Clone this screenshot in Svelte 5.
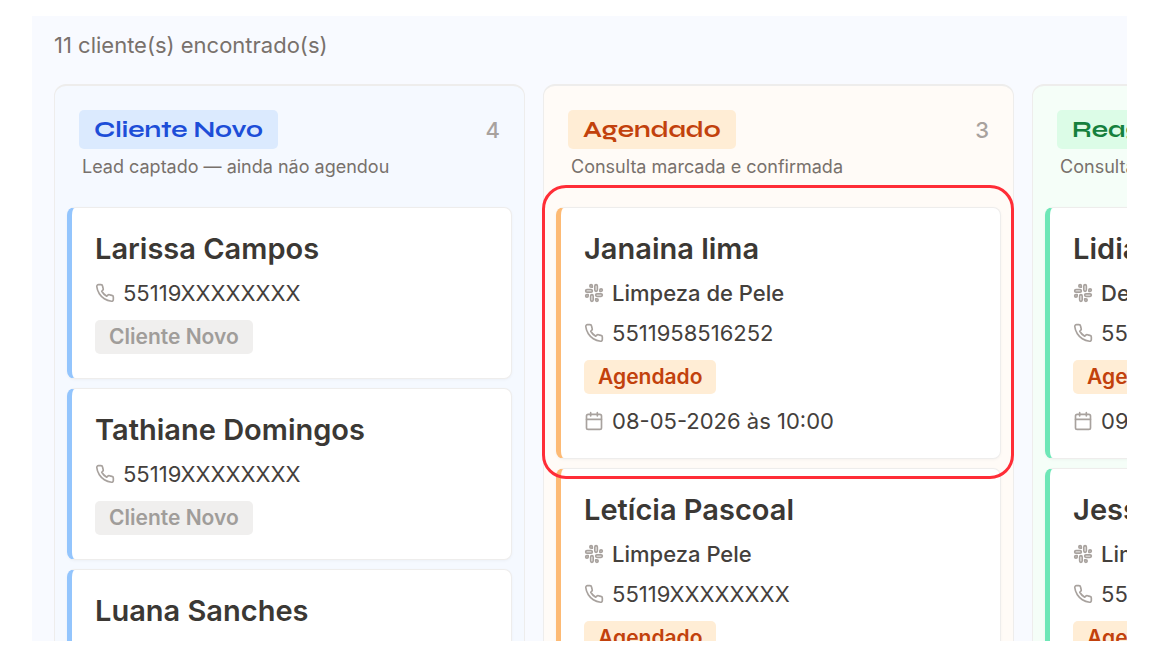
<script>
  const columns = [
    {
      title: 'Cliente Novo',
      tone: 'blue',
      count: 4,
      note: 'Lead captado — ainda não agendou',
      cards: [
        { name: 'Larissa Campos', phone: '55119XXXXXXXX', tag: 'Cliente Novo' },
        { name: 'Tathiane Domingos', phone: '55119XXXXXXXX', tag: 'Cliente Novo' },
        { name: 'Luana Sanches', phone: '55119XXXXXXXX', tag: 'Cliente Novo' }
      ]
    },
    {
      title: 'Agendado',
      tone: 'orange',
      count: 3,
      note: 'Consulta marcada e confirmada',
      cards: [
        { name: 'Janaina lima', service: 'Limpeza de Pele', phone: '5511958516252', tag: 'Agendado', date: '08-05-2026 às 10:00', selected: true },
        { name: 'Letícia Pascoal', service: 'Limpeza Pele', phone: '55119XXXXXXXX', tag: 'Agendado', date: '08-05-2026 às 11:00' }
      ]
    },
    {
      title: 'Reagendado',
      tone: 'green',
      count: 2,
      note: 'Consulta remarcada',
      cards: [
        { name: 'Lidia', service: 'Depilação', phone: '55119XXXXXXXX', tag: 'Agendado', date: '09-05-2026 às 10:00' },
        { name: 'Jessica', service: 'Limpeza de Pele', phone: '55119XXXXXXXX', tag: 'Agendado', date: '09-05-2026 às 11:00' }
      ]
    }
  ];
</script>

{#snippet icon(kind)}
  <svg class="icon" viewBox="0 0 24 24" aria-hidden="true">
    {#if kind === 'phone'}
      <path d="M22 16.92v3a2 2 0 0 1-2.18 2 19.79 19.79 0 0 1-8.63-3.07 19.5 19.5 0 0 1-6-6 19.79 19.79 0 0 1-3.07-8.67A2 2 0 0 1 4.11 2h3a2 2 0 0 1 2 1.72 12.84 12.84 0 0 0 .7 2.81 2 2 0 0 1-.45 2.11L8.09 9.91a16 16 0 0 0 6 6l1.27-1.27a2 2 0 0 1 2.11-.45 12.84 12.84 0 0 0 2.81.7A2 2 0 0 1 22 16.92z" />
    {:else if kind === 'service'}
      <rect width="3" height="8" x="13" y="2" rx="1.5" />
      <path d="M19 8.5V10h1.5A1.5 1.5 0 1 0 19 8.5" />
      <rect width="3" height="8" x="8" y="14" rx="1.5" />
      <path d="M5 15.5V14H3.5A1.5 1.5 0 1 0 5 15.5" />
      <rect width="8" height="3" x="14" y="13" rx="1.5" />
      <path d="M15.5 19H14v1.5a1.5 1.5 0 1 0 1.5-1.5" />
      <rect width="8" height="3" x="2" y="8" rx="1.5" />
      <path d="M8.5 5H10V3.5A1.5 1.5 0 1 0 8.5 5" />
    {:else}
      <rect x="3" y="4" width="18" height="18" rx="2" />
      <path d="M8 2v4M16 2v4M3 10h18" />
    {/if}
  </svg>
{/snippet}

<main class="board">
  <p class="total">11 cliente(s) encontrado(s)</p>
  <div class="columns">
    {#each columns as column}
      <section class="column {column.tone}">
        <header>
          <div class="heading">
            <h2>{column.title}</h2>
            <span class="count">{column.count}</span>
          </div>
          <p class="note">{column.note}</p>
        </header>
        <div class="cards">
          {#each column.cards as card}
            <article class="card" class:selected={card.selected}>
              <h3>{card.name}</h3>
              {#if card.service}
                <p class="row service">{@render icon('service')}{card.service}</p>
              {/if}
              <p class="row">{@render icon('phone')}{card.phone}</p>
              <span class="tag" class:booked={card.tag === 'Agendado'}>{card.tag}</span>
              {#if card.date}
                <p class="row">{@render icon('date')}{card.date}</p>
              {/if}
            </article>
          {/each}
        </div>
      </section>
    {/each}
  </div>
</main>

<style>
  :global(body) {
    margin: 0;
    background: #fff;
  }

  .board {
    box-sizing: border-box;
    height: calc(100vh - 43px);
    margin: 16px 38px 27px 32px;
    padding: 13px 0 0 22px;
    overflow: hidden;
    background: #f8faff;
    font-family: Inter, "Liberation Sans", sans-serif;
    color: #44403c;
  }

  h2, h3, p {
    margin: 0;
  }

  .total {
    font-size: 22px;
    line-height: 32px;
    color: #78716c;
  }

  .columns {
    display: flex;
    align-items: flex-start;
    gap: 18px;
    margin-top: 23px;
  }

  .column {
    box-sizing: border-box;
    flex: 0 0 43.9%;
    padding: 0 12px 12px;
    border: solid #eeedec;
    border-width: 2px 1px;
    border-radius: 12px;
  }

  .blue { --accent: #93c5fd; --soft: #dbeafe; --ink: #1d4ed8; background: #f5f9ff; }
  .orange { --accent: #fdba74; --soft: #ffedd5; --ink: #c2410c; background: #fffbf7; }
  .green { --accent: #6ee7b7; --soft: #dcfce7; --ink: #15803d; background: #f5fef8; }

  header {
    padding: 24px 12px 27px;
  }

  .heading {
    display: flex;
    align-items: center;
    justify-content: space-between;
  }

  h2 {
    padding: 0 15px;
    border-radius: 5px;
    background: var(--soft);
    color: var(--ink);
    font: 700 24px/39px Syne, "DejaVu Sans", sans-serif;
  }

  .count {
    font-size: 22px;
    font-weight: 500;
    color: #a8a29e;
  }

  .note {
    margin-top: 5px;
    padding-left: 3px;
    font-size: 18px;
    line-height: 26px;
    color: #78716c;
  }

  .cards {
    display: flex;
    flex-direction: column;
    gap: 9px;
  }

  .card {
    position: relative;
    display: flex;
    flex-direction: column;
    align-items: flex-start;
    gap: 14px;
    padding: 24px 23px;
    border: 1px solid #eeedec;
    border-left: 5px solid var(--accent);
    border-radius: 8px;
    background: #fff;
    box-shadow: 0 1px 3px rgb(0 0 0 / 4%);
  }

  .selected {
    z-index: 1;
  }

  .selected::after {
    content: "";
    position: absolute;
    inset: -23px -14px -21px -19px;
    border: 3px solid #ff2d37;
    border-radius: 24px;
    pointer-events: none;
  }

  h3 {
    font-size: 29px;
    font-weight: 600;
    line-height: 34px;
    color: #3b3834;
  }

  .row {
    display: flex;
    align-items: center;
    gap: 8px;
    font-size: 22px;
    line-height: 26px;
  }

  .service {
    font-weight: 500;
  }

  .icon {
    width: 20px;
    height: 20px;
    fill: none;
    stroke: #a8a29e;
    stroke-width: 2;
    stroke-linecap: round;
    stroke-linejoin: round;
  }

  .tag {
    padding: 0 14px;
    border-radius: 5px;
    background: #f0efee;
    color: #a09d9a;
    font-size: 21px;
    font-weight: 600;
    line-height: 34px;
  }

  .booked {
    background: #ffedd5;
    color: #c2410c;
  }
</style>
